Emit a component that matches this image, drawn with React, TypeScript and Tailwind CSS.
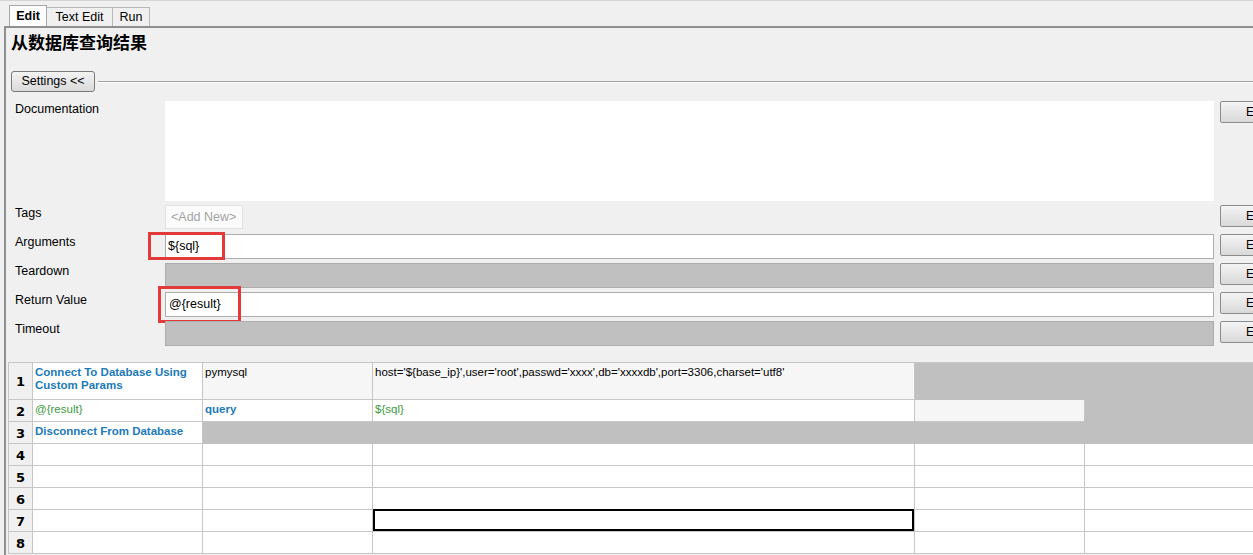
const ui = "font-['Liberation_Sans','DejaVu_Sans',sans-serif]";

type Cell = {
  text?: string;
  kind?: "kw" | "var" | "arg";
  bg?: "white" | "light" | "gray";
  selected?: boolean;
};

const rows: { h: string; cells: Cell[] }[] = [
  {
    h: "h-[37px]",
    cells: [
      { text: "Connect To Database Using Custom Params", kind: "kw", bg: "white" },
      { text: "pymysql", kind: "arg", bg: "light" },
      {
        text: "host='${base_ip}',user='root',passwd='xxxx',db='xxxxdb',port=3306,charset='utf8'",
        kind: "arg",
        bg: "light",
      },
      { bg: "gray" },
      { bg: "gray" },
    ],
  },
  {
    h: "h-[22px]",
    cells: [
      { text: "@{result}", kind: "var", bg: "white" },
      { text: "query", kind: "kw", bg: "white" },
      { text: "${sql}", kind: "var", bg: "white" },
      { bg: "light" },
      { bg: "gray" },
    ],
  },
  {
    h: "h-[22px]",
    cells: [
      { text: "Disconnect From Database", kind: "kw", bg: "white" },
      { bg: "gray" },
      { bg: "gray" },
      { bg: "gray" },
      { bg: "gray" },
    ],
  },
  { h: "h-[22px]", cells: [{}, {}, {}, {}, {}] },
  { h: "h-[22px]", cells: [{}, {}, {}, {}, {}] },
  { h: "h-[22px]", cells: [{}, {}, {}, {}, {}] },
  { h: "h-[22px]", cells: [{}, {}, { selected: true }, {}, {}] },
  { h: "h-[22px]", cells: [{}, {}, {}, {}, {}] },
];

const colW = ["w-[170px]", "w-[170px]", "w-[542px]", "w-[170px]", "w-[170px]"];

function EditButton() {
  return (
    <div className="ml-[6px] flex h-[22px] w-[70px] shrink-0 items-center rounded-[2px] border border-[#8c8c8c] bg-gradient-to-b from-[#f4f4f4] to-[#d9d9d9] pl-[25px] text-[12px] text-black">
      Edit
    </div>
  );
}

function FieldRow({
  label,
  mt,
  children,
  button = true,
}: {
  label: string;
  mt: string;
  children: React.ReactNode;
  button?: boolean;
}) {
  return (
    <div className={`flex items-start ${mt}`}>
      <div className="w-[150px] shrink-0 pt-[1px] text-[12.5px] leading-[15px] text-black">{label}</div>
      <div className="relative w-[1049px] shrink-0">{children}</div>
      {button && <EditButton />}
    </div>
  );
}

function GridCell({ cell, w }: { cell: Cell; w: string }) {
  const bg =
    cell.bg === "gray"
      ? "bg-[#c0c0c0] border-[#c0c0c0]"
      : cell.bg === "light"
        ? "bg-[#f6f6f6] border-[#c6c6c6]"
        : "bg-white border-[#c6c6c6]";
  const color =
    cell.kind === "kw"
      ? "font-bold text-[#1c7ab9]"
      : cell.kind === "var"
        ? "text-[#3d9a3d]"
        : "text-black";
  return (
    <div className={`relative ${w} shrink-0 border-b border-r ${bg} px-[2px] pt-[3px] text-[11.5px] leading-[13px] ${color}`}>
      {cell.text}
      {cell.selected && <div className="absolute inset-[0px] -top-[1px] border-2 border-black" />}
    </div>
  );
}

export default function App() {
  return (
    <div className={`h-[555px] w-[1253px] overflow-hidden bg-[#f0f0f0] ${ui}`}>
      {/* tabs */}
      <div className="flex h-[26px] items-end border-t border-[#d4d4d4] pl-[9px] text-[12.5px]">
        <div className="flex h-[21px] w-[38px] items-center justify-center border border-b-0 border-[#a8a8a8] bg-[#fcfcfc] font-bold">
          Edit
        </div>
        <div className="flex h-[19px] w-[66px] items-center justify-center border-r border-t border-[#b8b8b8] bg-[#f0f0f0]">
          Text Edit
        </div>
        <div className="flex h-[19px] w-[37px] items-center justify-center border-r border-t border-[#b8b8b8] bg-[#f0f0f0]">
          Run
        </div>
      </div>

      {/* panel */}
      <div className="ml-[4px] h-[529px] w-[1260px] border-l-2 border-t-2 border-[#8f8f8f]">
        <div className="pl-[5px] pt-[4px] font-['Noto_Sans_CJK_SC',sans-serif] text-[17px] font-bold leading-[20px] text-black">
          从数据库查询结果
        </div>

        <div className="mt-[19px] flex items-center pl-[5px]">
          <div className="flex h-[21px] w-[84px] items-center justify-center rounded-[3px] border border-[#7a7a7a] bg-gradient-to-b from-[#f3f3f3] to-[#dadada] text-[12.5px]">
            Settings &lt;&lt;
          </div>
          <div className="ml-[3px] flex-1 border-t border-b border-t-[#a0a0a0] border-b-white" />
        </div>

        <div className="mt-[9px] pl-[9px]">
          <FieldRow label="Documentation" mt="mt-0">
            <div className="h-[100px] bg-white" />
          </FieldRow>

          <FieldRow label="Tags" mt="mt-[4px]">
            <div className="flex">
              <div className="flex h-[24px] w-[78px] items-center border border-[#e2e2e2] bg-[#fbfbfb] pl-[5px] text-[12.5px] text-[#a4a4a4]">
                &lt;Add New&gt;
              </div>
            </div>
          </FieldRow>

          <FieldRow label="Arguments" mt="mt-[5px]">
            <div className="flex h-[25px] items-center border border-[#adadad] bg-white pl-[2px] text-[12.5px]">
              {"${sql}"}
            </div>
            <div className="absolute -left-[17px] -top-[2px] h-[28px] w-[77px] border-[3px] border-[#e23a3a]" />
          </FieldRow>

          <FieldRow label="Teardown" mt="mt-[4px]">
            <div className="h-[25px] border border-[#adadad] bg-[#c0c0c0]" />
          </FieldRow>

          <FieldRow label="Return Value" mt="mt-[4px]">
            <div className="flex h-[25px] items-center border border-[#adadad] bg-white pl-[3px] text-[12.5px]">
              {"@{result}"}
            </div>
            <div className="absolute -left-[7px] -top-[6px] h-[37px] w-[83px] border-[3px] border-[#e23a3a]" />
          </FieldRow>

          <FieldRow label="Timeout" mt="mt-[4px]">
            <div className="h-[25px] border border-[#adadad] bg-[#c0c0c0]" />
          </FieldRow>
        </div>

        {/* keyword table */}
        <div className="ml-[2px] mt-[16px] border-l border-t border-[#c6c6c6]">
          {rows.map((r, i) => (
            <div key={i} className={`flex ${r.h}`}>
              <div className="flex w-[24px] shrink-0 items-center justify-center border-b border-r border-[#c6c6c6] bg-[#f0f0f0] pt-[2px] font-['DejaVu_Sans',sans-serif] text-[13px] font-bold">
                {i + 1}
              </div>
              {r.cells.map((c, j) => (
                <GridCell key={j} cell={c} w={colW[j]} />
              ))}
            </div>
          ))}
        </div>
      </div>
    </div>
  );
}
